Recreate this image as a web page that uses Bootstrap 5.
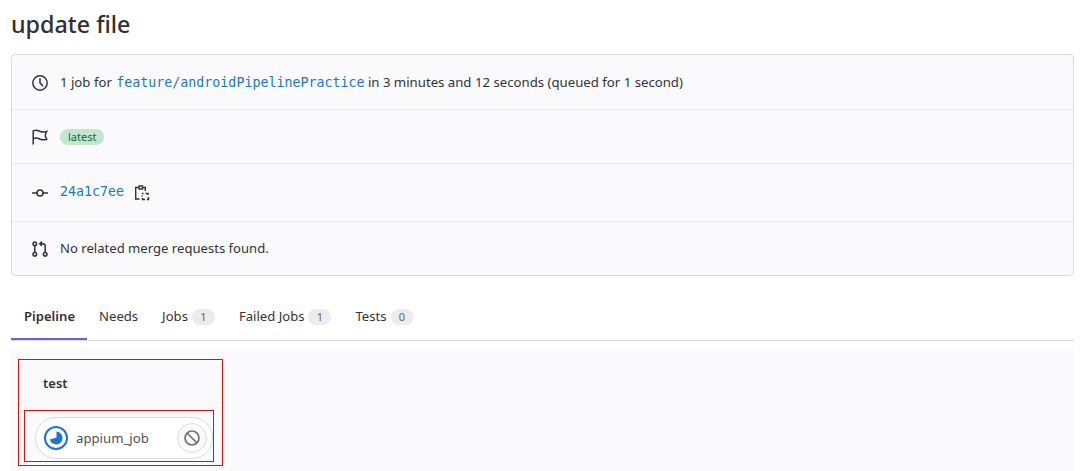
<!DOCTYPE html>
<html lang="en">
<head>
  <meta charset="UTF-8">
  <title>update file</title>
  <link href="https://cdn.jsdelivr.net/npm/bootstrap@5.3.0/dist/css/bootstrap.min.css" rel="stylesheet">
  <style>
    body {
      background: #fff;
      color: #333238;
      font-family: "Noto Sans", sans-serif;
      font-size: 13.2px;
      overflow: hidden;
    }
    .page-wrap { padding: 0 7px 0 11px; height: 471px; overflow: hidden; }
    .page-title { font-size: 23.3px; font-weight: 500; line-height: 32px; margin: 0; padding: 8px 0 14px; color: #303030; }
    .info-box { background: #fafafc; border: 1px solid #dcdcde; border-radius: 4px; }
    .info-row { padding: 0 20px; gap: 12px; border-bottom: 1px solid #ececef; }
    .info-row:last-child { border-bottom: 0; }
    .row-a { height: 55px; padding-top: 1px; }
    .row-b { height: 54px; }
    .row-c { height: 58px; }
    .row-d { height: 53px; padding-top: 1px; font-size: 13.1px; }
    .info-row svg { flex: none; width: 16px; height: 16px; }
    .mono-link { font-family: "DejaVu Sans Mono", "Liberation Mono", monospace; font-size: 13.3px; color: #1f75cb; text-decoration: none; }
    .branch-link { margin-left: 1px; }
    .hash-link { margin-top: -2px; }
    .tag-latest { background: #c3e6cd; color: #24663b; border-radius: 10px; font-size: 11px; line-height: 16px; padding: 0 8px; }
    .copy-icon { margin-left: -2px; }
    .tab-strip { margin-top: 24px; height: 41px; border-bottom: 1px solid #dcdcde; font-size: 13.1px; }
    .tab-item { color: #333238; text-decoration: none; padding: 0 12px 6px; height: 40px; display: flex; align-items: center; gap: 4px; }
    .tab-item.is-on { font-weight: 600; box-shadow: inset 0 -2px 0 #6666c4; padding: 0 12px 6px 13px; }
    .tab-count { background: #ececef; color: #626168; border-radius: 10px; font-size: 11px; line-height: 16px; min-width: 23px; text-align: center; }
    .stage-area { margin-top: 8px; background: #fafafc; padding: 10px 7px; height: 122px; }
    .stage-box { width: 205px; height: 107px; border: 1px solid #f00; padding: 0 5px; }
    .stage-name { font-weight: 600; font-size: 13px; line-height: 18px; padding: 14px 0 0 19px; height: 50px; }
    .job-box { border: 1px solid #f00; width: 190px; height: 52px; padding: 6px 0 0 10px; }
    .job-pill { width: 178px; height: 42px; background: #fff; border: 1px solid #dcdcde; border-radius: 21px; padding: 0 5px 0 8px; gap: 8px; }
    .job-pill .job-name { flex: 1; color: #535158; padding-top: 1px; font-size: 13.2px; }
    .cancel-btn { width: 30px; height: 30px; border: 1px solid #dcdcde; border-radius: 50%; background: #fafafa; }
  </style>
</head>
<body>
  <div class="page-wrap">
    <h1 class="page-title">update file</h1>

    <div class="info-box">
      <div class="info-row row-a d-flex align-items-center">
        <svg viewBox="0 0 16 16" fill="none" stroke="#333238" stroke-width="1.5"><circle cx="8" cy="8" r="7.2"/><path d="M8 3.800V8l2.600 2.600" stroke-linecap="round"/></svg>
        <span>1 job for <a class="mono-link branch-link" href="#">feature/androidPipelinePractice</a> in 3 minutes and 12 seconds (queued for 1 second)</span>
      </div>
      <div class="info-row row-b d-flex align-items-center">
        <svg viewBox="0 0 16 16" fill="none" stroke="#333238" stroke-width="1.5"><path d="M1.200 15.500V2c2-1 4-1 6.500.2 2.500 1.100 4.800 1 7 .2-.9 1.700-1.400 2.900-1.400 4s.5 2.300 1.400 3.800c-2.200.8-4.500.9-7-.2-2.500-1.200-4.500-1.200-6.500-.2"/></svg>
        <span class="tag-latest">latest</span>
      </div>
      <div class="info-row row-c d-flex align-items-center">
        <svg viewBox="0 0 16 16" fill="none" stroke="#333238" stroke-width="1.5"><circle cx="8" cy="8" r="3"/><path d="M0 8h5M11 8h5"/></svg>
        <a class="mono-link hash-link" href="#">24a1c7ee</a>
        <svg class="copy-icon" viewBox="0 0 16 16" fill="none" stroke="#333238" stroke-width="1.4"><path d="M4.500 2.500H1.700v11.500H5.500"/><path d="M5 1h3.500v3H5zM8.500 2.500h2.800V6"/><path d="M8 8.500h1.500M11.500 8.500H14v1.500M14.500 12v2.500H13M11 14.500H8.500V13M8 10.500v1" stroke-width="1.500"/></svg>
      </div>
      <div class="info-row row-d d-flex align-items-center">
        <svg viewBox="0 0 16 16" fill="none" stroke="#333238" stroke-width="1.5"><circle cx="2.800" cy="2.800" r="1.800"/><circle cx="2.800" cy="13.200" r="1.800"/><circle cx="13.200" cy="13.200" r="1.800"/><path d="M2.800 4.600v6.800M13.200 11.400V5c0-1.500-.8-2.300-2.200-2.300H8M10 .5 7.800 2.700 10 4.900"/></svg>
        <span>No related merge requests found.</span>
      </div>
    </div>

    <div class="tab-strip d-flex">
      <a class="tab-item is-on" href="#">Pipeline</a>
      <a class="tab-item" href="#">Needs</a>
      <a class="tab-item" href="#">Jobs <span class="tab-count">1</span></a>
      <a class="tab-item" href="#">Failed Jobs <span class="tab-count">1</span></a>
      <a class="tab-item" href="#">Tests <span class="tab-count">0</span></a>
    </div>

    <div class="stage-area">
      <div class="stage-box">
        <div class="stage-name">test</div>
        <div class="job-box">
          <div class="job-pill d-flex align-items-center">
            <svg width="24" height="24" viewBox="0 0 24 24" class="flex-shrink-0"><circle cx="12" cy="12" r="11" fill="#fff" stroke="#1f75cb" stroke-width="2"/><path d="M12.500 11.500V5.500A6.500 6.500 0 1 1 5.800 13.500z" fill="#1f75cb"/></svg>
            <span class="job-name">appium_job</span>
            <span class="cancel-btn d-flex align-items-center justify-content-center">
              <svg width="16" height="16" viewBox="0 0 16 16" fill="none" stroke="#737278" stroke-width="1.700"><circle cx="8" cy="8" r="7"/><path d="M3 3l10 10"/></svg>
            </span>
          </div>
        </div>
      </div>
    </div>
  </div>
  <script src="https://cdn.jsdelivr.net/npm/bootstrap@5.3.0/dist/js/bootstrap.bundle.min.js"></script>
</body>
</html>
